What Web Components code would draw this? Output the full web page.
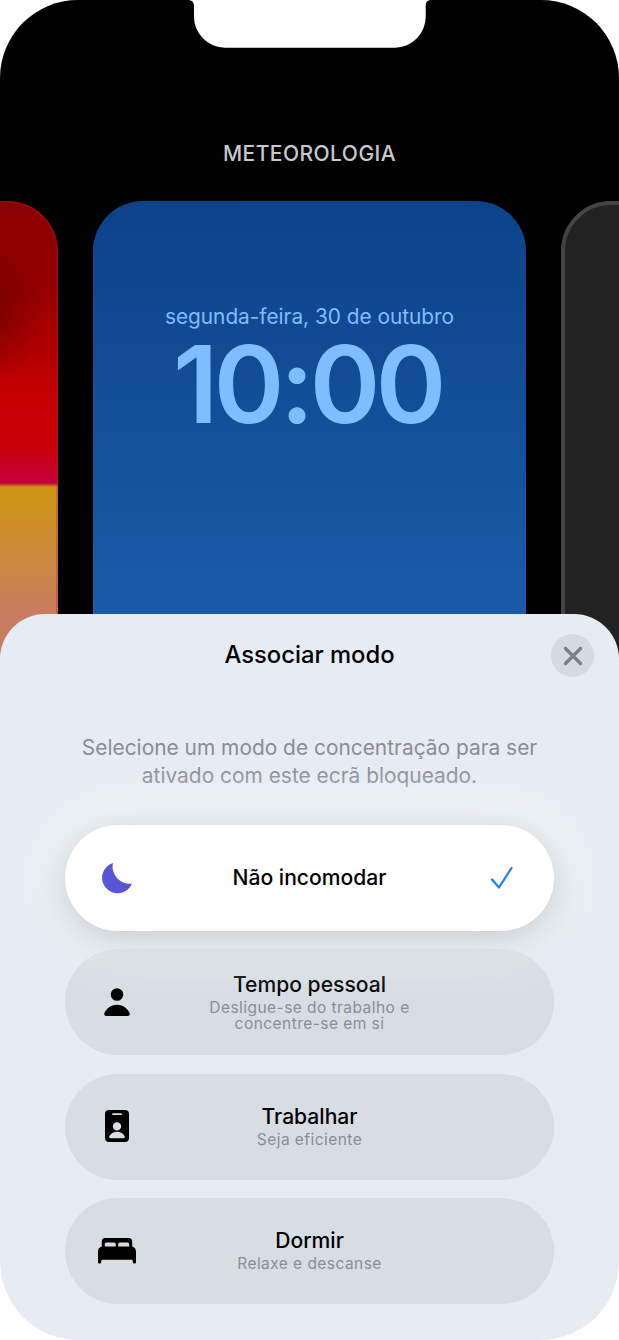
<!doctype html>
<html lang="pt">
<head>
<meta charset="utf-8">
<title>Associar modo</title>
<style>
  html, body { margin: 0; background: #fff; font-family: Inter, "Liberation Sans", sans-serif; }
</style>
</head>
<body>
<phone-frame>
  <lock-carousel title-text="METEOROLOGIA">
    <lock-card kind="red"></lock-card>
    <lock-card kind="blue" date="segunda-feira, 30 de outubro" time="10:00"></lock-card>
    <lock-card kind="dark"></lock-card>
  </lock-carousel>
  <mode-sheet slot="sheet" heading="Associar modo">
    <span slot="description">Selecione um modo de concentração para ser<br>ativado com este ecrã bloqueado.</span>
    <mode-row icon="moon" label="Não incomodar" selected></mode-row>
    <mode-row icon="person" label="Tempo pessoal">Desligue-se do trabalho e<br>concentre-se em si</mode-row>
    <mode-row icon="badge" label="Trabalhar">Seja eficiente</mode-row>
    <mode-row icon="bed" label="Dormir">Relaxe e descanse</mode-row>
  </mode-sheet>
</phone-frame>
<script>
const ICONS = {
  moon: '<svg width="31" height="31" viewBox="0 0 31 31"><path fill="#5856d6" d="M11 0A15.5 15.5 0 1 0 30 20.5A17 17 0 0 1 11 0Z"/></svg>',
  person: '<svg width="26" height="28" viewBox="0 0 26 28"><circle cx="13" cy="6.5" r="6.3" fill="#000"/><path fill="#000" d="M2.5 28C.3 28-.3 26.200.7 24.300 3 19.800 7.800 16.800 13 16.800s10 3 12.300 7.500c1 1.900.4 3.700-1.800 3.700Z"/></svg>',
  badge: '<svg width="24" height="34" viewBox="0 0 24 34"><path fill="#000" fill-rule="evenodd" d="M4 0H20A4 4 0 0 1 24 4V28A4 4 0 0 1 20 32H4A4 4 0 0 1 0 28V4A4 4 0 0 1 4 0ZM8 3.300A.9.9 0 0 0 8 5.100H16A.9.9 0 0 0 16 3.300ZM12 12.200A4.200 4.200 0 1 0 12 20.600 4.200 4.200 0 1 0 12 12.200ZM12 21.800C8.500 21.800 5.500 23.800 4.300 26.300 3.800 27.300 4.300 28.200 5.400 28.200H18.600C19.700 28.200 20.200 27.300 19.700 26.300 18.500 23.800 15.500 21.800 12 21.800Z"/></svg>',
  bed: '<svg width="38" height="26" viewBox="0 0 38 26"><path fill="#000" fill-rule="evenodd" d="M7 0H31C33 0 34.200 1.300 34.200 3.200V8.600C36.600 9.300 38 11.200 38 13.500V24.300A1.200 1.200 0 0 1 36.800 25.500H36A1.200 1.200 0 0 1 34.900 24.600L34.400 21.800H3.600L3.100 24.600A1.200 1.200 0 0 1 2 25.500H1.200A1.200 1.200 0 0 1 0 24.300V13.500C0 11.200 1.400 9.300 3.800 8.600V3.200C3.800 1.300 5 0 7 0ZM8.500 4.500C7.400 4.500 6.800 5.300 6.800 6.500V8.500H17.800V6.500C17.800 5.300 17.100 4.500 16 4.500ZM22 4.500C20.900 4.500 20.200 5.300 20.200 6.500V8.500H31.200V6.500C31.200 5.300 30.600 4.500 29.500 4.500Z"/></svg>'
};

function define(name, css, html, setup) {
  customElements.define(name, class extends HTMLElement {
    constructor() {
      super();
      const root = this.attachShadow({ mode: 'open' });
      root.innerHTML = '<style>' + css + '</style>' + html;
      if (setup) setup(this, root);
    }
  });
}

define('phone-frame', `
  :host { display: block; position: relative; width: 619px; height: 1340px; overflow: hidden;
          background: linear-gradient(#000 0 900px, transparent 900px); border-radius: 78px; }
  .notch { position: absolute; left: 187px; top: 0; width: 245px; height: 48px; display: block; }
`, `
  <slot></slot>
  <svg class="notch" viewBox="0 0 245 48" aria-hidden="true">
    <path fill="#fff" d="M0 0H245C241 0 238.700 1.500 238.700 6V16A31 31 0 0 1 208 47.700H38A31 31 0 0 1 7 16V6C7 1.500 4.500 0 0 0Z"/>
  </svg>
  <slot name="sheet"></slot>
`);

define('lock-carousel', `
  :host { display: block; }
  h2 { margin: 0; padding-top: 142px; height: 201px; box-sizing: border-box; text-align: center;
       font: 450 21px/24px Inter, "Liberation Sans", sans-serif; letter-spacing: .45px; color: #c9c9c9; }
  .row { display: flex; justify-content: center; gap: 35px; }
`, `<h2></h2><div class="row"><slot></slot></div>`, (el, root) => {
  root.querySelector('h2').textContent = el.getAttribute('title-text');
});

define('lock-card', `
  :host { display: block; flex: 0 0 433px; width: 433px; height: 560px; box-sizing: border-box; border-radius: 50px;
          font-family: Inter, "Liberation Sans", sans-serif; text-align: center; color: #80bdff; }
  :host([kind="blue"]) { background: linear-gradient(180deg, #0d4289 0, #195ba8 413px); padding-top: 103px; }
  :host([kind="red"]) {
    background:
      radial-gradient(ellipse 50px 70px at 368px 112px, rgba(60,0,0,.36), rgba(60,0,0,0) 100%),
      linear-gradient(180deg, #8a0000 0, #940000 90px, #a80000 130px, #c50000 195px, #c80008 245px, #c4003c 282px, #cf9612 286px, #c97c62 415px);
    box-shadow: inset 0 0 0 2px rgba(170,30,30,.3);
  }
  :host([kind="dark"]) { background: #222; border: 4px solid #444; }
  .date { font-size: 20.800px; line-height: 26px; font-weight: 400; }
  .time { font-size: 107px; line-height: 106px; font-weight: 600; letter-spacing: -4.400px; margin-top: 1px; padding-right: 4px; }
`, `<div class="date"></div><div class="time"></div>`, (el, root) => {
  root.querySelector('.date').textContent = el.getAttribute('date') || '';
  root.querySelector('.time').textContent = el.getAttribute('time') || '';
});

define('close-button', `
  :host { display: flex; align-items: center; justify-content: center; width: 43px; height: 43px;
          border-radius: 50%; background: #d6dae2; }
`, `<svg width="20" height="20" viewBox="0 0 20 20" aria-hidden="true"><path d="M2.500 2.500 17.500 17.500M17.500 2.500 2.500 17.500" stroke="#7d8089" stroke-width="3.400" stroke-linecap="round" fill="none"/></svg>`);

define('mode-sheet', `
  :host { display: block; position: absolute; left: 0; right: 0; bottom: 0; height: 726px; box-sizing: border-box;
          background: #e7ecf4; border-radius: 45px 45px 78px 78px; padding: 0 65px;
          font-family: Inter, "Liberation Sans", sans-serif; }
  header { position: relative; height: 82px; display: flex; align-items: center; justify-content: center; margin: 0 -65px; }
  h1 { margin: 0; font-size: 23.800px; font-weight: 550; line-height: 28px; color: #000; }
  close-button { position: absolute; right: 25px; top: 20px; }
  .desc { margin: 38px -20px 0; text-align: center; font-size: 20.900px; line-height: 28px; color: #8a8d96; height: 91px; }
  .list { display: flex; flex-direction: column; gap: 18.300px; }
`, `
  <header><h1></h1><close-button></close-button></header>
  <div class="desc"><slot name="description"></slot></div>
  <div class="list"><slot></slot></div>
`, (el, root) => { root.querySelector('h1').textContent = el.getAttribute('heading'); });

define('mode-row', `
  :host { display: grid; grid-template-columns: 104px 1fr 104px; align-items: center; height: 106px;
          border-radius: 53px; background: #d8dde4; color: #000; }
  :host([selected]) { background: #fff;
    box-shadow: 0 8px 32px rgba(90,100,122,.27), 0 0 40px 28px rgba(244,247,245,.7); position: relative; z-index: 1; }
  .icon, .check { display: flex; align-items: center; justify-content: center; }
  .text { text-align: center; margin-top: -1.500px; }
  .label { font-size: 21.100px; line-height: 25px; font-weight: 450; }
  .sub { font-size: 15.500px; line-height: 16px; letter-spacing: .45px; color: #8a8e98; margin-top: 3px; }
  svg { display: block; }
`, `
  <div class="icon"></div>
  <div class="text"><div class="label"></div><div class="sub"><slot></slot></div></div>
  <div class="check"></div>
`, (el, root) => {
  root.querySelector('.icon').innerHTML = ICONS[el.getAttribute('icon')];
  root.querySelector('.label').textContent = el.getAttribute('label');
  if (el.hasAttribute('selected')) {
    root.querySelector('.check').innerHTML = '<svg width="24" height="24" viewBox="0 0 24 24"><path d="M2 13.500 9 21.500 21.500 2" fill="none" stroke="#2583e6" stroke-width="2.300" stroke-linecap="round" stroke-linejoin="round"/></svg>';
    root.querySelector('.sub').remove();
  }
});
</script>
</body>
</html>
